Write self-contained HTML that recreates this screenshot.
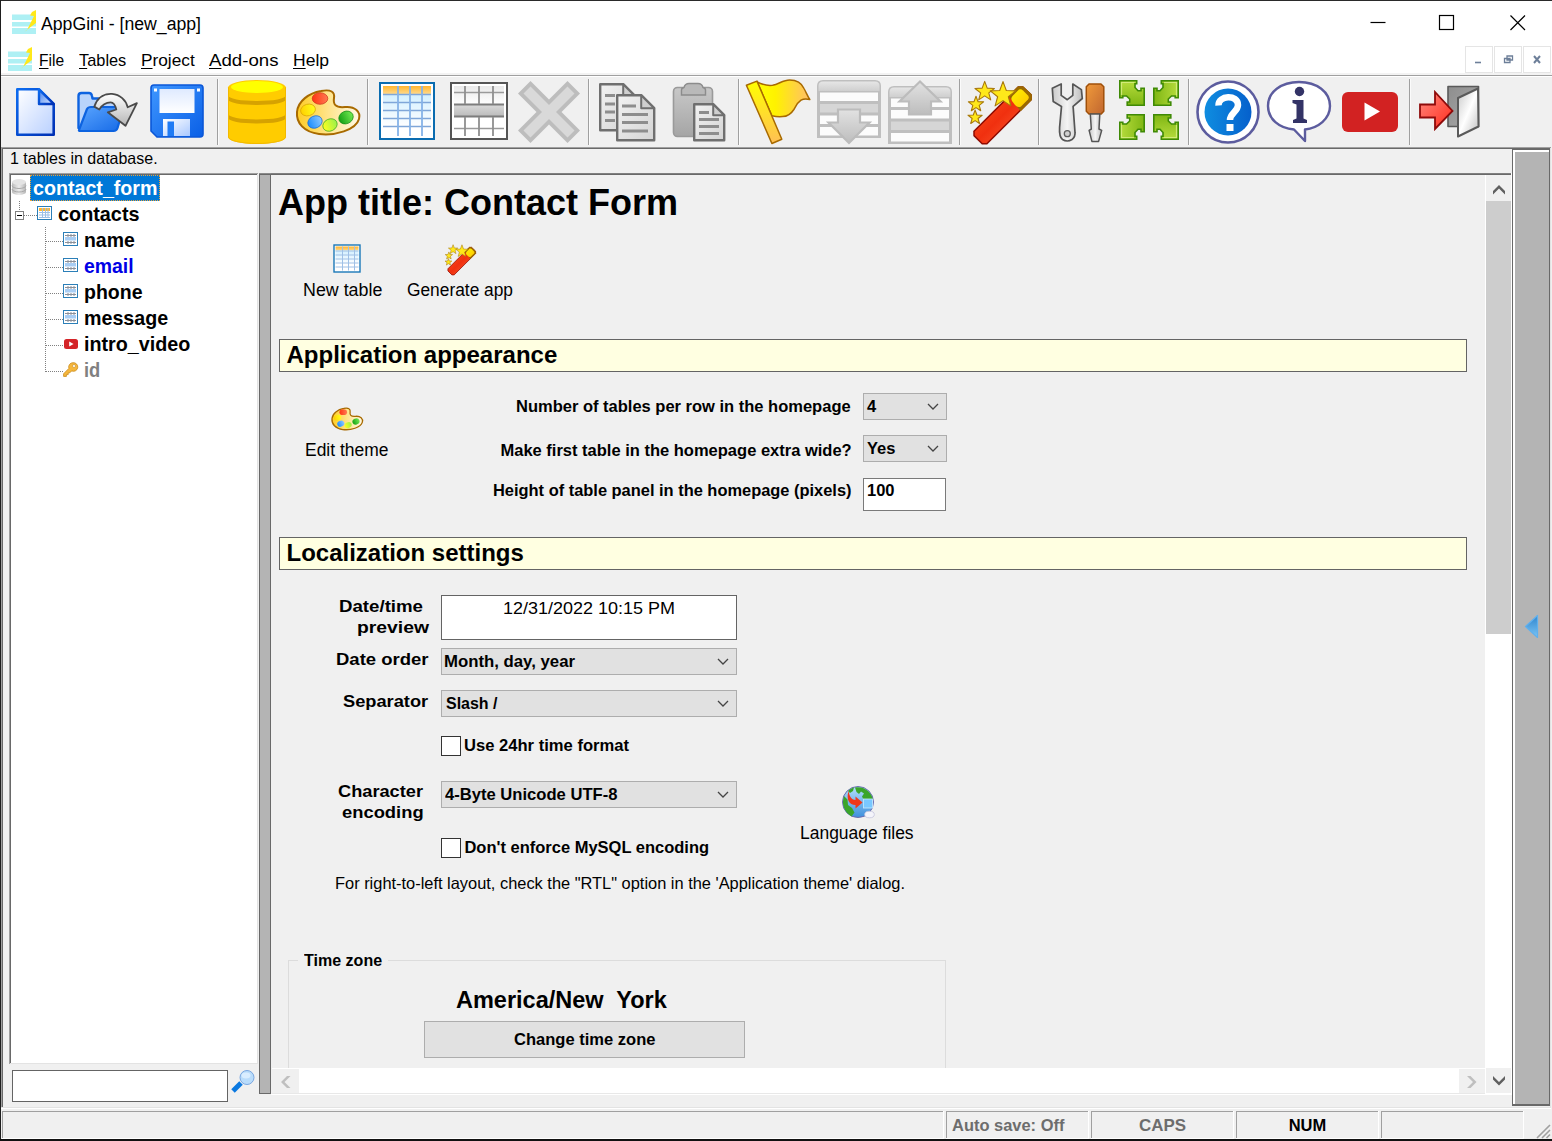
<!DOCTYPE html>
<html lang="en"><head><meta charset="utf-8"><title>AppGini - [new_app]</title>
<style>
html,body{margin:0;padding:0}
body{width:1552px;height:1141px;position:relative;overflow:hidden;background:#f0f0f0;font-family:"Liberation Sans",sans-serif}
body div,body svg,body span.t{position:absolute}
span.t{white-space:nowrap;transform-origin:0 50%;display:block}
svg{overflow:visible}
u{text-decoration:underline;text-decoration-thickness:1px;text-underline-offset:2px;text-decoration-skip-ink:none}
</style></head><body>
<div style="left:0px;top:0px;width:1552px;height:75px;background:#fff;"></div>
<svg style="left:12px;top:10px" width="24" height="24" viewBox="0 0 24 24"><rect x="0" y="4.5" width="24" height="5.5" fill="#aef0f4"/><rect x="0" y="12" width="24" height="4.5" fill="#aef0f4"/><rect x="0" y="18" width="24" height="6" fill="#aef0f4"/><path d="M24 0 L20 2 L18 5.5 L22 6 L15 20 L12 22 L24 13 Z" fill="#ffe81a"/></svg>
<span class="t" style="left:41.00px;top:15px;font-size:18px;line-height:18px;color:#000;transform:scaleX(0.9810);">AppGini - [new_app]</span>
<svg style="left:1360px;top:10px" width="180" height="30" viewBox="0 0 180 30"><path d="M10.5 12.5H25.5" stroke="#000" stroke-width="1.2" fill="none"/><rect x="79.5" y="5.5" width="14" height="14" fill="none" stroke="#000" stroke-width="1.2"/><path d="M150.5 5.5L165 20M165 5.5L150.5 20" stroke="#000" stroke-width="1.2" fill="none"/></svg>
<svg style="left:8px;top:47px" width="24" height="24" viewBox="0 0 24 24"><rect x="0" y="4.5" width="24" height="5.5" fill="#aef0f4"/><rect x="0" y="12" width="24" height="4.5" fill="#aef0f4"/><rect x="0" y="18" width="24" height="6" fill="#aef0f4"/><path d="M24 0 L20 2 L18 5.5 L22 6 L15 20 L12 22 L24 13 Z" fill="#ffe81a"/></svg>
<span class="t" style="left:39.3px;top:52px;font-size:17px;line-height:17px;transform:scaleX(0.9163)"><u>F</u>ile</span>
<span class="t" style="left:79px;top:52px;font-size:17px;line-height:17px;transform:scaleX(0.9625)"><u>T</u>ables</span>
<span class="t" style="left:141px;top:52px;font-size:17px;line-height:17px;transform:scaleX(1.0149)"><u>P</u>roject</span>
<span class="t" style="left:209px;top:52px;font-size:17px;line-height:17px;transform:scaleX(1.0976)"><u>A</u>dd-ons</span>
<span class="t" style="left:293px;top:52px;font-size:17px;line-height:17px;transform:scaleX(1.0296)"><u>H</u>elp</span>
<div style="left:1465px;top:46px;width:28px;height:27px;background:#fff;border:1px solid #e5e5e5;box-sizing:border-box"></div>
<div style="left:1494px;top:46px;width:28px;height:27px;background:#fff;border:1px solid #e5e5e5;box-sizing:border-box"></div>
<div style="left:1523px;top:46px;width:28px;height:27px;background:#fff;border:1px solid #e5e5e5;box-sizing:border-box"></div>
<svg style="left:1465px;top:46px" width="86" height="27" viewBox="0 0 86 27"><path d="M10 16.5H16" stroke="#6d7f99" stroke-width="1.6"/><path d="M42 10H47.500V14H42ZM39.500 12.500H45V16.500H39.500Z" fill="#fff" stroke="#6d7f99" stroke-width="1.300"/><path d="M69 10L75 17M75 10L69 17" stroke="#6d7f99" stroke-width="2"/></svg>
<div style="left:0px;top:0px;width:1552px;height:1px;background:#2a2a2a;"></div>
<div style="left:0px;top:0px;width:1px;height:1141px;background:#1e1e1e;"></div>
<div style="left:0px;top:1139px;width:1552px;height:2px;background:#111;"></div>
<div style="left:1px;top:73px;width:1552px;height:2px;background:#f3f3f3;"></div>
<div style="left:1px;top:75px;width:1551px;height:1px;background:#a0a0a0;"></div>
<div style="left:1px;top:76px;width:1551px;height:1px;background:#fff;"></div>
<div style="left:1px;top:147px;width:1550px;height:1px;background:#a0a0a0;"></div>
<div style="left:2px;top:148px;width:1548px;height:1px;background:#696969;"></div>
<div style="left:1px;top:147px;width:1px;height:961px;background:#a0a0a0;"></div>
<div style="left:2px;top:148px;width:1px;height:959px;background:#696969;"></div>
<div style="left:1550px;top:148px;width:1px;height:960px;background:#e3e3e3;"></div>
<div style="left:1px;top:1108px;width:1550px;height:1px;background:#fff;"></div>
<div style="left:1px;top:1107px;width:1550px;height:1px;background:#e3e3e3;"></div>
<div style="left:1512px;top:149px;width:38px;height:957px;background:#b4b4b4;border:1px solid #696969;box-sizing:border-box"></div>
<div style="left:1513px;top:150px;width:1px;height:955px;background:#fff;"></div>
<div style="left:1514px;top:150px;width:1px;height:955px;background:#fff;"></div>
<div style="left:1513px;top:150px;width:36px;height:1px;background:#fff;"></div>
<div style="left:1513px;top:151px;width:36px;height:1px;background:#fff;"></div>
<div style="left:1512px;top:149px;width:38px;height:1px;background:#696969;"></div>
<div style="left:1512px;top:1104px;width:38px;height:1px;background:#696969;"></div>
<svg style="left:1524px;top:614px" width="16" height="26" viewBox="0 0 16 26"><defs><linearGradient id="tri" x1="0" y1="0" x2="0" y2="1"><stop offset="0" stop-color="#2f86cf"/><stop offset="1" stop-color="#7cc4f3"/></linearGradient></defs><path d="M13.5 1.5V23.5L1.5 12.5Z" fill="url(#tri)" stroke="#5fb0ee" stroke-width="1.2" stroke-linejoin="round"/></svg>
<div style="left:2px;top:1111px;width:941px;height:1px;background:#a0a0a0;"></div>
<div style="left:2px;top:1111px;width:1px;height:27px;background:#a0a0a0;"></div>
<div style="left:943px;top:1111px;width:1px;height:28px;background:#fff;"></div>
<div style="left:2px;top:1138px;width:942px;height:1px;background:#fff;"></div>
<div style="left:946px;top:1111px;width:142px;height:1px;background:#a0a0a0;"></div>
<div style="left:946px;top:1111px;width:1px;height:27px;background:#a0a0a0;"></div>
<div style="left:1088px;top:1111px;width:1px;height:28px;background:#fff;"></div>
<div style="left:946px;top:1138px;width:143px;height:1px;background:#fff;"></div>
<div style="left:1091px;top:1111px;width:142px;height:1px;background:#a0a0a0;"></div>
<div style="left:1091px;top:1111px;width:1px;height:27px;background:#a0a0a0;"></div>
<div style="left:1233px;top:1111px;width:1px;height:28px;background:#fff;"></div>
<div style="left:1091px;top:1138px;width:143px;height:1px;background:#fff;"></div>
<div style="left:1236px;top:1111px;width:142px;height:1px;background:#a0a0a0;"></div>
<div style="left:1236px;top:1111px;width:1px;height:27px;background:#a0a0a0;"></div>
<div style="left:1378px;top:1111px;width:1px;height:28px;background:#fff;"></div>
<div style="left:1236px;top:1138px;width:143px;height:1px;background:#fff;"></div>
<div style="left:1381px;top:1111px;width:142px;height:1px;background:#a0a0a0;"></div>
<div style="left:1381px;top:1111px;width:1px;height:27px;background:#a0a0a0;"></div>
<div style="left:1523px;top:1111px;width:1px;height:28px;background:#fff;"></div>
<div style="left:1381px;top:1138px;width:143px;height:1px;background:#fff;"></div>
<span class="t" style="left:952.00px;top:1117px;font-size:16.5px;line-height:16.5px;color:#6d6d6d;font-weight:bold;transform:scaleX(0.9968);">Auto save: Off</span>
<span class="t" style="left:1138.80px;top:1117px;font-size:16.5px;line-height:16.5px;color:#6d6d6d;font-weight:bold;transform:scaleX(1.0252);">CAPS</span>
<span class="t" style="left:1288.71px;top:1117px;font-size:16.5px;line-height:16.5px;color:#000;font-weight:bold;">NUM</span>
<svg style="left:1536px;top:1124px" width="14" height="14" viewBox="0 0 14 14"><path d="M1 14L14 1M6 14L14 6M10.5 14L14 10.5" stroke="#a0a0a0" stroke-width="1.6"/></svg>
<div style="left:217px;top:79px;width:1px;height:66px;background:#a0a0a0;"></div>
<div style="left:218px;top:79px;width:1px;height:66px;background:#fbfbfb;"></div>
<div style="left:367px;top:79px;width:1px;height:66px;background:#a0a0a0;"></div>
<div style="left:368px;top:79px;width:1px;height:66px;background:#fbfbfb;"></div>
<div style="left:588px;top:79px;width:1px;height:66px;background:#a0a0a0;"></div>
<div style="left:589px;top:79px;width:1px;height:66px;background:#fbfbfb;"></div>
<div style="left:738px;top:79px;width:1px;height:66px;background:#a0a0a0;"></div>
<div style="left:739px;top:79px;width:1px;height:66px;background:#fbfbfb;"></div>
<div style="left:959px;top:79px;width:1px;height:66px;background:#a0a0a0;"></div>
<div style="left:960px;top:79px;width:1px;height:66px;background:#fbfbfb;"></div>
<div style="left:1038px;top:79px;width:1px;height:66px;background:#a0a0a0;"></div>
<div style="left:1039px;top:79px;width:1px;height:66px;background:#fbfbfb;"></div>
<div style="left:1188px;top:79px;width:1px;height:66px;background:#a0a0a0;"></div>
<div style="left:1189px;top:79px;width:1px;height:66px;background:#fbfbfb;"></div>
<div style="left:1409px;top:79px;width:1px;height:66px;background:#a0a0a0;"></div>
<div style="left:1410px;top:79px;width:1px;height:66px;background:#fbfbfb;"></div>
<svg style="left:0;top:0" width="0" height="0"><defs>
<linearGradient id="gDoc" x1="0" y1="0" x2="1" y2="1"><stop offset="0" stop-color="#ffffff"/><stop offset="1" stop-color="#b9d0ff"/></linearGradient>
<linearGradient id="gDocS" x1="0" y1="0" x2="1" y2="1"><stop offset="0" stop-color="#0d6cf0"/><stop offset="1" stop-color="#0030b4"/></linearGradient>
<linearGradient id="gFold" x1="0" y1="0" x2="1" y2="1"><stop offset="0" stop-color="#3b7df0"/><stop offset="1" stop-color="#dfe9ff"/></linearGradient>
<linearGradient id="gBlue" x1="0" y1="0" x2="1" y2="1"><stop offset="0" stop-color="#3f97ff"/><stop offset="1" stop-color="#0a5fe6"/></linearGradient>
<linearGradient id="gFolder" x1="0" y1="0" x2="1" y2="1"><stop offset="0" stop-color="#5aa5ff"/><stop offset="1" stop-color="#1569e6"/></linearGradient>
<linearGradient id="gArrow" x1="0" y1="0" x2="0" y2="1"><stop offset="0" stop-color="#ffffff"/><stop offset="1" stop-color="#b5b5b5"/></linearGradient>
<linearGradient id="gLabel" x1="0" y1="0" x2="0" y2="1"><stop offset="0" stop-color="#dfeaff"/><stop offset="1" stop-color="#ffffff"/></linearGradient>
<linearGradient id="gShut" x1="0" y1="0" x2="1" y2="1"><stop offset="0" stop-color="#ffffff"/><stop offset="1" stop-color="#a9c8ff"/></linearGradient>
<linearGradient id="gPal" x1="0" y1="0" x2="1" y2="0"><stop offset="0" stop-color="#ffcc24"/><stop offset=".5" stop-color="#ffe48a"/><stop offset="1" stop-color="#fffae6"/></linearGradient>
<linearGradient id="gHdr" x1="0" y1="0" x2="0" y2="1"><stop offset="0" stop-color="#ffb52e"/><stop offset="1" stop-color="#ffd98c"/></linearGradient>
<linearGradient id="gRows" x1="0" y1="0" x2="0" y2="1"><stop offset="0" stop-color="#d2efff"/><stop offset="1" stop-color="#ffffff"/></linearGradient>
<linearGradient id="gGray" x1="0" y1="0" x2="0" y2="1"><stop offset="0" stop-color="#e9e9e9"/><stop offset="1" stop-color="#ffffff"/></linearGradient>
<linearGradient id="gBand" x1="0" y1="0" x2="0" y2="1"><stop offset="0" stop-color="#d9d9d9"/><stop offset="1" stop-color="#bcbcbc"/></linearGradient>
<linearGradient id="gPaper" x1="0" y1="0" x2="1" y2="1"><stop offset="0" stop-color="#f2f2f2"/><stop offset="1" stop-color="#d4d4d4"/></linearGradient>
<linearGradient id="gClip" x1="0" y1="0" x2="0" y2="1"><stop offset="0" stop-color="#c8c8c8"/><stop offset="1" stop-color="#a5a5a5"/></linearGradient>
<linearGradient id="gFlag" x1="0" y1="0" x2="1" y2="0"><stop offset="0" stop-color="#ffff00"/><stop offset=".35" stop-color="#fff200"/><stop offset="1" stop-color="#ffbe6a"/></linearGradient>
<linearGradient id="gPole" x1="0" y1="0" x2="0" y2="1"><stop offset="0" stop-color="#ffff00"/><stop offset="1" stop-color="#ffbf55"/></linearGradient>
<linearGradient id="gWand" x1="0" y1="0" x2="1" y2="1"><stop offset="0" stop-color="#ff5a1f"/><stop offset=".5" stop-color="#f0300f"/><stop offset="1" stop-color="#ff6a3a"/></linearGradient>
<linearGradient id="gTip" x1="0" y1="0" x2="1" y2="1"><stop offset="0" stop-color="#fff200"/><stop offset="1" stop-color="#ffc400"/></linearGradient>
<linearGradient id="gMetal" x1="0" y1="0" x2="1" y2="0"><stop offset="0" stop-color="#c9c9c9"/><stop offset=".5" stop-color="#f4f4f4"/><stop offset="1" stop-color="#bdbdbd"/></linearGradient>
<linearGradient id="gHandle" x1="0" y1="0" x2="1" y2="1"><stop offset="0" stop-color="#f09a3a"/><stop offset="1" stop-color="#c06630"/></linearGradient>
<linearGradient id="gGreen" x1="0" y1="0" x2="0" y2="1"><stop offset="0" stop-color="#b6dc3c"/><stop offset="1" stop-color="#7fb614"/></linearGradient>
<linearGradient id="gHelp" x1="0" y1="0" x2="1" y2="0"><stop offset="0" stop-color="#0f8de0"/><stop offset="1" stop-color="#0560cc"/></linearGradient>
<linearGradient id="gRedArrow" x1="0" y1="0" x2="1" y2="1"><stop offset="0" stop-color="#ff8a80"/><stop offset="1" stop-color="#ff2a1a"/></linearGradient>
<linearGradient id="gDoorB" x1="0" y1="0" x2="1" y2="1"><stop offset="0" stop-color="#8e8e8e"/><stop offset="1" stop-color="#a9a9a9"/></linearGradient>
<linearGradient id="gDoorF" x1="0" y1="0" x2="1" y2="1"><stop offset="0" stop-color="#c8c8c8"/><stop offset=".5" stop-color="#ffffff"/><stop offset="1" stop-color="#bdbdbd"/></linearGradient>
<linearGradient id="gDisabled" x1="0" y1="0" x2="0" y2="1"><stop offset="0" stop-color="#e2e2e2"/><stop offset="1" stop-color="#bdbdbd"/></linearGradient>
<linearGradient id="gDisHead" x1="0" y1="0" x2="0" y2="1"><stop offset="0" stop-color="#e6e6e6"/><stop offset="1" stop-color="#cfcfcf"/></linearGradient>
<linearGradient id="bR" x1="0" x2="1"><stop offset="0" stop-color="#ff3512"/><stop offset="1" stop-color="#ff7a52"/></linearGradient>
<linearGradient id="bY" x1="0" x2="1"><stop offset="0" stop-color="#ffd000"/><stop offset="1" stop-color="#ffff1e"/></linearGradient>
<linearGradient id="bB" x1="0" x2="1"><stop offset="0" stop-color="#1a8cff"/><stop offset="1" stop-color="#8ec9ff"/></linearGradient>
<linearGradient id="bL" x1="0" x2="1"><stop offset="0" stop-color="#ffff1e"/><stop offset="1" stop-color="#9af04a"/></linearGradient>
<linearGradient id="bG" x1="0" x2="1"><stop offset="0" stop-color="#14a014"/><stop offset="1" stop-color="#72ea52"/></linearGradient>
</defs></svg>
<svg style="left:15px;top:87px" width="42" height="50" viewBox="0 0 42 50"><path d="M2.300 2.300H24L38.700 17V47.700H2.300Z" fill="url(#gDoc)" stroke="url(#gDocS)" stroke-width="2.600" stroke-linejoin="round"/><path d="M24 2.300V17H38.700Z" fill="url(#gFold)" stroke="url(#gDocS)" stroke-width="2.400" stroke-linejoin="round"/></svg>
<svg style="left:76px;top:90px" width="64" height="44" viewBox="0 0 64 44"><path d="M2.5 6Q2.5 3 5.5 3H13Q15.5 3 16 6L16.5 8.5H38Q41 8.5 41 11.5V38H2.5Z" fill="#b9d4fb" stroke="#0d63e0" stroke-width="2.4" stroke-linejoin="round"/><path d="M3 40L11 19Q12 17 15 17H45Q48 17 47 20L41.5 38Q40.5 41 37.5 41H4.5Q2.5 41 3 40Z" fill="url(#gFolder)" stroke="#0d63e0" stroke-width="2.2" stroke-linejoin="round"/><path d="M18.300 16.600C22 6 30 3.500 36 3.900C44 4.500 50 10 51.700 17.300L60.900 13.100L49.500 35.800L31.800 22.300L40.300 19.500C39 14 37 12.400 34.600 12.400C30 12.400 26 15 23.300 19.500Z" fill="url(#gArrow)" stroke="#4a4a4a" stroke-width="1.8" stroke-linejoin="round"/></svg>
<svg style="left:150px;top:84px" width="54" height="54" viewBox="0 0 54 54"><path d="M4 1H50Q53 1 53 4V50Q53 53 50 53H7L1 47V4Q1 1 4 1Z" fill="url(#gBlue)" stroke="#0b57d8" stroke-width="1.6"/><rect x="9.500" y="5" width="35" height="24" fill="url(#gLabel)"/><rect x="4" y="4.500" width="3" height="3" fill="#fff"/><rect x="47" y="4.500" width="3" height="3" fill="#fff"/><rect x="13" y="35" width="27" height="17" fill="url(#gShut)"/><rect x="17.500" y="37.500" width="6.500" height="14.500" fill="#1f7bf5"/></svg>
<svg style="left:228px;top:80px" width="58" height="64" viewBox="0 0 58 64"><path d="M0 7V57A29 7 0 0 0 58 57V7Z" fill="#ffcc00"/><path d="M0 15.500A29 5.500 0 0 0 58 15.500V19.500A29 5.500 0 0 1 0 19.500Z" fill="#d6a200"/><path d="M0 34A29 5.500 0 0 0 58 34V38A29 5.500 0 0 1 0 38Z" fill="#d6a200"/><ellipse cx="29" cy="7.500" rx="29" ry="7.500" fill="#ffcc00"/><ellipse cx="29" cy="7" rx="26" ry="6" fill="#ffff00"/><path d="M.5 7.500V57A28.500 6.500 0 0 0 57.500 57V7.500" fill="none" stroke="#f2b800" stroke-width="1"/></svg>
<svg style="left:295px;top:88px" width="67" height="49" viewBox="0 0 67 49"><path d="M26 3C36 1 40 4 39 10C38 16 40 20 50 19C60 18 66 24 64 31C61 42 40 48 24 46C9 44 1 35 2 24C3 13 14 5 26 3Z" fill="url(#gPal)" stroke="#a86a00" stroke-width="2"/><ellipse cx="25" cy="10.500" rx="7.800" ry="5.800" fill="url(#bR)" stroke="#c8301a" stroke-width=".7"/><ellipse cx="13" cy="22" rx="7.500" ry="5.800" fill="url(#bY)" stroke="#d9a400" stroke-width=".7" transform="rotate(-15 13 22)"/><ellipse cx="20" cy="34" rx="7.400" ry="6" fill="url(#bB)" stroke="#1a6ad0" stroke-width=".7" transform="rotate(-25 20 34)"/><ellipse cx="35" cy="37" rx="7.400" ry="6" fill="url(#bL)" stroke="#3fa820" stroke-width=".7" transform="rotate(-25 35 37)"/><ellipse cx="51" cy="29.500" rx="7.400" ry="6.200" fill="url(#bG)" stroke="#128a12" stroke-width=".7" transform="rotate(-25 51 29.5)"/></svg>
<svg style="left:379px;top:82px" width="56" height="58" viewBox="0 0 56 58"><rect x="1" y="1" width="54" height="56" fill="#fff" stroke="#0a6cb0" stroke-width="2"/><rect x="4" y="4" width="48" height="8" fill="url(#gHdr)"/><rect x="4" y="12" width="48" height="33" fill="url(#gRows)"/><path d="M4 12.500H52M4 20.500H52M4 28.500H52M4 36.500H52M4 44.500H52" stroke="#7fa6d8" stroke-width="1.600" fill="none"/><path d="M19 4V54M31 4V54M43 4V54" stroke="#86b3e8" stroke-width="1.800" fill="none"/></svg>
<svg style="left:450px;top:82px" width="58" height="58" viewBox="0 0 58 58"><rect x="1" y="1" width="56" height="56" fill="#fff" stroke="#555" stroke-width="2"/><rect x="4" y="4" width="50" height="19" fill="url(#gGray)"/><rect x="4" y="23" width="50" height="11" fill="url(#gBand)"/><path d="M4 10.500H54M4 46.500H54" stroke="#9a9a9a" stroke-width="1.600"/><path d="M4 22.500H54M4 34.500H54" stroke="#7d7d7d" stroke-width="1.800"/><path d="M15 4V22M29 4V22M43 4V22M15 35V54M29 35V54M43 35V54" stroke="#8f8f8f" stroke-width="1.800"/></svg>
<svg style="left:517px;top:80px" width="64" height="64" viewBox="0 0 64 64"><path d="M13.500 1L32 19.500L50.500 1L63 13.500L44.500 32L63 50.500L50.500 63L32 44.500L13.500 63L1 50.500L19.500 32L1 13.500Z" fill="#bdbdbd"/><path d="M13.500 6.500L32 25L50.500 6.500L57.500 13.500L39 32L57.500 50.500L50.500 57.500L32 39L13.500 57.500L6.500 50.500L25 32L6.500 13.500Z" fill="#d9d9d9"/></svg>
<svg style="left:598px;top:82px" width="58" height="60" viewBox="0 0 58 60"><path d="M2.2 2.2H25.200000000000003L36.2 13.2V48.2H2.2Z" fill="url(#gPaper)" stroke="#6f6f6f" stroke-width="2.400" stroke-linejoin="round"/><path d="M25.200000000000003 2.2V13.2H36.2Z" fill="#cfcfcf" stroke="#6f6f6f" stroke-width="2" stroke-linejoin="round"/><path d="M7 13.5H17" stroke="#8d8d8d" stroke-width="3"/><path d="M7 22H17" stroke="#8d8d8d" stroke-width="3"/><path d="M7 30H17" stroke="#8d8d8d" stroke-width="3"/><path d="M7 38.5H17" stroke="#8d8d8d" stroke-width="3"/><path d="M19.2 13.2H43.2L56.2 26.2V58.2H19.2Z" fill="url(#gPaper)" stroke="#6f6f6f" stroke-width="2.400" stroke-linejoin="round"/><path d="M43.2 13.2V26.2H56.2Z" fill="#cfcfcf" stroke="#6f6f6f" stroke-width="2" stroke-linejoin="round"/><path d="M24 24H38" stroke="#8d8d8d" stroke-width="3"/><path d="M24 32.5H50" stroke="#8d8d8d" stroke-width="3"/><path d="M24 40.5H50" stroke="#8d8d8d" stroke-width="3"/><path d="M24 49H50" stroke="#8d8d8d" stroke-width="3"/></svg>
<svg style="left:672px;top:82px" width="54" height="60" viewBox="0 0 54 60"><rect x="1.500" y="5.500" width="39" height="49" rx="4" fill="url(#gClip)" stroke="#9a9a9a" stroke-width="1.600"/><path d="M9.500 13V8Q9.500 6 12 5.500Q13 1.500 17 1.500H26Q30 1.500 31 5.500Q33.500 6 33.500 8V13Z" fill="#b9b9b9" stroke="#8c8c8c" stroke-width="1.400"/><path d="M22.2 22.2H41.2L52.2 33.2V58.2H22.2Z" fill="url(#gPaper)" stroke="#6f6f6f" stroke-width="2.400" stroke-linejoin="round"/><path d="M41.2 22.2V33.2H52.2Z" fill="#cfcfcf" stroke="#6f6f6f" stroke-width="2" stroke-linejoin="round"/><path d="M27 30.5H37" stroke="#8d8d8d" stroke-width="3"/><path d="M27 37.5H47" stroke="#8d8d8d" stroke-width="3"/><path d="M27 44.5H47" stroke="#8d8d8d" stroke-width="3"/><path d="M27 51.5H47" stroke="#8d8d8d" stroke-width="3"/></svg>
<svg style="left:745px;top:79px" width="67" height="66" viewBox="0 0 67 66"><path d="M12 2.800C18 6 22 7 27.600 6.300C34 5 38 1 44.600 1C52 1 57 5 59 9.500C61 13 62.500 17 64.800 20.500C61 19.500 58 20 56 21.200C52 24 51 27 48.900 30.500C46 35 42 37.500 37.600 37.600C33 38 30 37.500 26.900 36.800Z" fill="url(#gFlag)" stroke="#a86a00" stroke-width="1.500" stroke-linejoin="round"/><path d="M1.400 6.300L12 2.100L36.800 60.200L26.900 64.500Z" fill="url(#gPole)" stroke="#a86a00" stroke-width="1.500" stroke-linejoin="round"/></svg>
<svg style="left:817px;top:80px" width="64" height="64" viewBox="0 0 64 64"><path d="M0 6Q0 0 6 0H58Q64 0 64 6V58H0Z" fill="#bfbfbf"/><path d="M1.500 6Q1.500 1.500 6 1.500H58Q62.500 1.500 62.500 6V11H1.500Z" fill="url(#gDisHead)"/><rect x="3" y="12.500" width="58" height="8.500" fill="#fcfcfc"/><rect x="3" y="24" width="58" height="8.500" fill="#d6d6d6"/><rect x="3" y="35.500" width="58" height="8.500" fill="#fcfcfc"/><rect x="3" y="47" width="58" height="8.500" fill="#fcfcfc"/><path d="M21 29.500H43V42.500H52.500L32 63L11.500 42.500H21Z" fill="url(#gDisabled)" stroke="#bcbcbc" stroke-width="2.200"/></svg>
<svg style="left:888px;top:80px" width="64" height="64" viewBox="0 0 64 64"><path d="M0 12Q0 6 6 6H58Q64 6 64 12V64H0Z" fill="#bfbfbf"/><path d="M1.500 12Q1.500 7.500 6 7.500H58Q62.500 7.500 62.500 12V17H1.500Z" fill="url(#gDisHead)"/><rect x="3" y="18.500" width="58" height="8.500" fill="#fcfcfc"/><rect x="3" y="30" width="58" height="8.500" fill="#fcfcfc"/><rect x="3" y="41.500" width="58" height="8.500" fill="#d6d6d6"/><rect x="3" y="53" width="58" height="8.500" fill="#fcfcfc"/><path d="M32 1.500L52.500 21.500H43V34.500H21V21.500H11.500Z" fill="url(#gDisabled)" stroke="#bcbcbc" stroke-width="2.200"/></svg>
<svg style="left:968px;top:80px" width="64" height="64" viewBox="0 0 64 64"><g transform="scale(1.0000)"><path d="M6 51.200L50.200 7H54.900L63.100 14.900V19.700L18.900 63.800H14.200L6 55.600Z" fill="url(#gWand)" stroke="#8e0a00" stroke-width="1.500" stroke-linejoin="round"/><path d="M41.300 15.900L50.200 7H54.900L63.100 14.900V19.700L52.700 30.100Z" fill="#9a6a00" stroke="#9a6a00" stroke-width="1.500" stroke-linejoin="round"/><path d="M44.500 16L51 9.500Q53 8.500 55 10.500L60 15.500Q61.500 17.500 60 19.500L53 26.500Q50 28 47 25L44 21Q42.500 18.500 44.500 16Z" fill="url(#gTip)"/><path d="M16.70 1.40L19.22 8.13L26.40 8.45L20.77 12.92L22.70 19.85L16.70 15.88L10.70 19.85L12.63 12.92L7.00 8.45L14.18 8.13Z" fill="#ffe81a" stroke="#a8780a" stroke-width="1.100" stroke-linejoin="round"/><path d="M35.00 1.60L38.31 10.45L47.74 10.86L40.35 16.74L42.88 25.84L35.00 20.63L27.12 25.84L29.65 16.74L22.26 10.86L31.69 10.45Z" fill="#ffe81a" stroke="#a8780a" stroke-width="1.100" stroke-linejoin="round"/><path d="M8.00 16.30L9.97 21.58L15.61 21.83L11.20 25.34L12.70 30.77L8.00 27.66L3.30 30.77L4.80 25.34L0.39 21.83L6.03 21.58Z" fill="#ffe81a" stroke="#a8780a" stroke-width="1.100" stroke-linejoin="round"/><path d="M7.10 30.10L8.93 34.99L14.14 35.21L10.06 38.46L11.45 43.49L7.10 40.61L2.75 43.49L4.14 38.46L0.06 35.21L5.27 34.99Z" fill="#ffe81a" stroke="#a8780a" stroke-width="1.100" stroke-linejoin="round"/></g></svg>
<svg style="left:1051px;top:83px" width="56" height="60" viewBox="0 0 56 60"><path d="M1.300 5.300L10.200 1V12.400L16.300 16.700L21.800 12.400V1L30.400 6.600L31.300 15.500L22.100 23.400L24 49.200Q24.500 54 21 56.500Q16.300 59.500 11.500 56.500Q8 54 8.600 44.300L10.500 23.400L2.200 18.500Z" fill="url(#gMetal)" stroke="#555" stroke-width="1.700" stroke-linejoin="round"/><circle cx="16.300" cy="50.700" r="3" fill="#d0d0d0" stroke="#5e5e5e" stroke-width="1.300"/><path d="M38 1H50L52.800 3.800V28.300L50 31.100H38L35.300 28.300V3.800Z" fill="url(#gHandle)" stroke="#a0500a" stroke-width="1.500" stroke-linejoin="round"/><path d="M39.300 31.100H48.800L48 46L50.700 47.400L47.600 58.400H40.900L38.100 47.400L40.300 46Z" fill="url(#gMetal)" stroke="#555" stroke-width="1.500" stroke-linejoin="round"/></svg>
<svg style="left:1119px;top:80px" width="60" height="60" viewBox="0 0 60 60"><g transform="translate(0 0) rotate(0 13 13)"><path d="M.8 .8H17.700V3.800H16V7.500L19 10.700H22V8.200H25.200V25.200H8.200V22H10.700V19L7.500 16H3.800V17.700H.8Z" fill="url(#gGreen)" stroke="#3f8a06" stroke-width="1.600" stroke-linejoin="miter"/><path d="M2.500 15V2.500H15.500" fill="none" stroke="#d9f08a" stroke-width="1.200" opacity=".8"/></g><g transform="translate(34 0) rotate(90 13 13)"><path d="M.8 .8H17.700V3.800H16V7.500L19 10.700H22V8.200H25.200V25.200H8.200V22H10.700V19L7.500 16H3.800V17.700H.8Z" fill="url(#gGreen)" stroke="#3f8a06" stroke-width="1.600" stroke-linejoin="miter"/><path d="M2.500 15V2.500H15.500" fill="none" stroke="#d9f08a" stroke-width="1.200" opacity=".8"/></g><g transform="translate(34 34) rotate(180 13 13)"><path d="M.8 .8H17.700V3.800H16V7.500L19 10.700H22V8.200H25.200V25.200H8.200V22H10.700V19L7.500 16H3.800V17.700H.8Z" fill="url(#gGreen)" stroke="#3f8a06" stroke-width="1.600" stroke-linejoin="miter"/><path d="M2.500 15V2.500H15.500" fill="none" stroke="#d9f08a" stroke-width="1.200" opacity=".8"/></g><g transform="translate(0 34) rotate(270 13 13)"><path d="M.8 .8H17.700V3.800H16V7.500L19 10.700H22V8.200H25.200V25.200H8.200V22H10.700V19L7.500 16H3.800V17.700H.8Z" fill="url(#gGreen)" stroke="#3f8a06" stroke-width="1.600" stroke-linejoin="miter"/><path d="M2.500 15V2.500H15.500" fill="none" stroke="#d9f08a" stroke-width="1.200" opacity=".8"/></g></svg>
<svg style="left:1196px;top:80px" width="64" height="64" viewBox="0 0 64 64"><circle cx="32" cy="32" r="30.500" fill="#fff" stroke="#5c5c9e" stroke-width="2.600"/><circle cx="32" cy="32" r="23.500" fill="url(#gHelp)"/><path d="M22.500 25.500C22 15 42 14 42 25C42 31.500 34 33 34 40" fill="none" stroke="#fff" stroke-width="6.500"/><rect x="30.500" y="44" width="7" height="7" fill="#fff"/></svg>
<svg style="left:1266px;top:80px" width="66" height="63" viewBox="0 0 66 63"><path d="M33 2C51 2 64 12 64 26C64 39 52 48 39 49.500V61L28 49.500C13 48 2 39 2 26C2 12 15 2 33 2Z" fill="#fff" stroke="#5c5c9e" stroke-width="2.400" stroke-linejoin="round"/><circle cx="33.500" cy="11.500" r="4.700" fill="#333366"/><path d="M26.500 20H37.500V38.500L41 40V43H27V40L30.500 38.500V24.500L26.500 23Z" fill="#333366"/></svg>
<svg style="left:1342px;top:92px" width="56" height="40" viewBox="0 0 56 40"><rect width="56" height="40" rx="6" fill="#d22222"/><path d="M22.500 10.500L38 19.500L22.500 28.500Z" fill="#fff"/></svg>
<svg style="left:1418px;top:85px" width="62" height="53" viewBox="0 0 62 53"><path d="M30 1.500H60.500V41.500H30Z" fill="url(#gDoorB)" stroke="#5a5a5a" stroke-width="1.600" stroke-linejoin="round"/><path d="M40 13L60 3.500L60.500 41.500L40 51.500Z" fill="url(#gDoorF)" stroke="#5a5a5a" stroke-width="2" stroke-linejoin="round"/><path d="M2 19.500H17V7L34.500 26L17 44V32.500H2Z" fill="url(#gRedArrow)" stroke="#8e0a0a" stroke-width="1.800" stroke-linejoin="miter"/></svg>
<span class="t" style="left:10.00px;top:150px;font-size:16.5px;line-height:16.5px;color:#000;transform:scaleX(0.9693);">1 tables in database.</span>
<div style="left:9px;top:173px;width:249px;height:891px;background:#fff;"></div>
<div style="left:9px;top:173px;width:249px;height:1px;background:#a0a0a0;"></div>
<div style="left:10px;top:174px;width:247px;height:1px;background:#696969;"></div>
<div style="left:9px;top:173px;width:1px;height:891px;background:#a0a0a0;"></div>
<div style="left:10px;top:174px;width:1px;height:889px;background:#696969;"></div>
<div style="left:257px;top:174px;width:1px;height:890px;background:#e3e3e3;"></div>
<div style="left:10px;top:1063px;width:248px;height:1px;background:#e3e3e3;"></div>
<div style="left:30px;top:175px;width:130px;height:26px;background:#0078d7;box-sizing:border-box;border:1px dotted #e8a33d"></div>
<span class="t" style="left:33.00px;top:177px;font-size:21px;line-height:21px;color:#fff;font-weight:bold;transform:scaleX(0.9359);">contact_form</span>
<svg style="left:12px;top:179px" width="14" height="16" viewBox="0 0 14 16"><defs><linearGradient id="dbg" x1="0" x2="1"><stop offset="0" stop-color="#bdbdbd"/><stop offset=".5" stop-color="#ececec"/><stop offset="1" stop-color="#b5b5b5"/></linearGradient></defs><path d="M0 3V13A7 3 0 0 0 14 13V3Z" fill="url(#dbg)"/><ellipse cx="7" cy="3" rx="7" ry="3" fill="#e4e4e4"/><path d="M0 6.5A7 3 0 0 0 14 6.5M0 10A7 3 0 0 0 14 10" fill="none" stroke="#a9a9a9" stroke-width="1"/></svg>
<div style="left:19px;top:201px;width:1px;height:10px;background:none;background:repeating-linear-gradient(180deg,#808080 0 1px,transparent 1px 2px)"></div>
<div style="left:24px;top:215px;width:13px;height:1px;background:none;background:repeating-linear-gradient(90deg,#808080 0 1px,transparent 1px 2px)"></div>
<div style="left:45px;top:227px;width:1px;height:145px;background:none;background:repeating-linear-gradient(180deg,#808080 0 1px,transparent 1px 2px)"></div>
<div style="left:15px;top:211px;width:9px;height:9px;background:#fff;border:1px solid #808080;box-sizing:border-box"></div>
<div style="left:17px;top:215px;width:5px;height:1px;background:#000;"></div>
<svg style="left:37px;top:206px" width="15" height="14" viewBox="0 0 15 14"><rect x=".5" y=".5" width="14" height="13" fill="#fff" stroke="#2b7fb8"/><rect x="2" y="2" width="11" height="3" fill="#ffb732"/><path d="M2 6.5H13M2 9H13M2 11.5H13M5.5 2V12M8.5 2V12M11 2V12" stroke="#9dc0e6" stroke-width="1" fill="none"/></svg>
<span class="t" style="left:58.00px;top:203px;font-size:21px;line-height:21px;color:#000;font-weight:bold;transform:scaleX(0.9437);">contacts</span>
<div style="left:46px;top:241px;width:17px;height:1px;background:none;background:repeating-linear-gradient(90deg,#808080 0 1px,transparent 1px 2px)"></div>
<span class="t" style="left:83.60px;top:229px;font-size:21px;line-height:21px;color:#000;font-weight:bold;transform:scaleX(0.9250);">name</span>
<svg style="left:63px;top:232px" width="15" height="14" viewBox="0 0 15 14"><rect x=".5" y=".5" width="14" height="13" fill="#fff" stroke="#2b7fb8"/><rect x="2" y="5" width="11" height="3.5" fill="#a9cdf3"/><path d="M2 3.5H13M2 10.5H13M5 2V5M8 2V5M11 2V5M5 9V12M8 9V12M11 9V12" stroke="#8a8f99" stroke-width="1" fill="none"/></svg>
<div style="left:46px;top:267px;width:17px;height:1px;background:none;background:repeating-linear-gradient(90deg,#808080 0 1px,transparent 1px 2px)"></div>
<span class="t" style="left:83.60px;top:255px;font-size:21px;line-height:21px;color:#0000e6;font-weight:bold;transform:scaleX(0.9244);">email</span>
<svg style="left:63px;top:258px" width="15" height="14" viewBox="0 0 15 14"><rect x=".5" y=".5" width="14" height="13" fill="#fff" stroke="#2b7fb8"/><rect x="2" y="5" width="11" height="3.5" fill="#a9cdf3"/><path d="M2 3.5H13M2 10.5H13M5 2V5M8 2V5M11 2V5M5 9V12M8 9V12M11 9V12" stroke="#8a8f99" stroke-width="1" fill="none"/></svg>
<div style="left:46px;top:293px;width:17px;height:1px;background:none;background:repeating-linear-gradient(90deg,#808080 0 1px,transparent 1px 2px)"></div>
<span class="t" style="left:83.60px;top:281px;font-size:21px;line-height:21px;color:#000;font-weight:bold;transform:scaleX(0.9286);">phone</span>
<svg style="left:63px;top:284px" width="15" height="14" viewBox="0 0 15 14"><rect x=".5" y=".5" width="14" height="13" fill="#fff" stroke="#2b7fb8"/><rect x="2" y="5" width="11" height="3.5" fill="#a9cdf3"/><path d="M2 3.5H13M2 10.5H13M5 2V5M8 2V5M11 2V5M5 9V12M8 9V12M11 9V12" stroke="#8a8f99" stroke-width="1" fill="none"/></svg>
<div style="left:46px;top:319px;width:17px;height:1px;background:none;background:repeating-linear-gradient(90deg,#808080 0 1px,transparent 1px 2px)"></div>
<span class="t" style="left:83.60px;top:307px;font-size:21px;line-height:21px;color:#000;font-weight:bold;transform:scaleX(0.9357);">message</span>
<svg style="left:63px;top:310px" width="15" height="14" viewBox="0 0 15 14"><rect x=".5" y=".5" width="14" height="13" fill="#fff" stroke="#2b7fb8"/><rect x="2" y="5" width="11" height="3.5" fill="#a9cdf3"/><path d="M2 3.5H13M2 10.5H13M5 2V5M8 2V5M11 2V5M5 9V12M8 9V12M11 9V12" stroke="#8a8f99" stroke-width="1" fill="none"/></svg>
<div style="left:46px;top:345px;width:17px;height:1px;background:none;background:repeating-linear-gradient(90deg,#808080 0 1px,transparent 1px 2px)"></div>
<span class="t" style="left:83.60px;top:333px;font-size:21px;line-height:21px;color:#000;font-weight:bold;transform:scaleX(0.9391);">intro_video</span>
<div style="left:46px;top:371px;width:17px;height:1px;background:none;background:repeating-linear-gradient(90deg,#808080 0 1px,transparent 1px 2px)"></div>
<span class="t" style="left:83.60px;top:359px;font-size:21px;line-height:21px;color:#808080;font-weight:bold;transform:scaleX(0.8720);">id</span>
<svg style="left:64px;top:339px" width="14" height="10" viewBox="0 0 14 10"><rect width="14" height="10" rx="2.5" fill="#d42428"/><path d="M5.2 2.6L9.6 5L5.2 7.4Z" fill="#fff"/></svg>
<svg style="left:63px;top:362px" width="15" height="15" viewBox="0 0 15 15"><path d="M10 .7a4.3 4.3 0 0 0-4.1 5.7L.6 11.8V14.4H3.4V12.6H5.2V10.8H6.8L8.7 8.9A4.3 4.3 0 1 0 10 .7Z" fill="#f6b73c" stroke="#c98a1a" stroke-width=".8"/><circle cx="11" cy="4" r="1.5" fill="#fff" stroke="#c98a1a" stroke-width=".6"/></svg>
<div style="left:12px;top:1070px;width:216px;height:32px;background:#fff;border:1px solid #646464;box-sizing:border-box"></div>
<svg style="left:230px;top:1069px" width="26" height="26" viewBox="0 0 26 26"><path d="M3 22L11 14" stroke="#0a78e0" stroke-width="5" /><circle cx="17" cy="8.5" r="7" fill="#b9dcfb" stroke="#7aa7e0" stroke-width="1"/><ellipse cx="16" cy="6.5" rx="4.5" ry="3" fill="#d9edff"/></svg>
<div style="left:259px;top:174px;width:12px;height:920px;background:#b4b4b4;border:1px solid #696969;box-sizing:border-box"></div>
<div style="left:259px;top:173px;width:12px;height:1px;background:#8a8a8a;"></div>
<div style="left:271px;top:174px;width:1240px;height:1px;background:#696969;"></div>
<div style="left:271px;top:173px;width:1240px;height:1px;background:#808080;"></div>
<div style="left:1511px;top:173px;width:1px;height:922px;background:#fff;"></div>
<div style="left:271px;top:1094px;width:1241px;height:1px;background:#fff;"></div>
<span class="t" style="left:278.00px;top:185px;font-size:36px;line-height:36px;color:#000;font-weight:bold;">App title: Contact Form</span>
<svg style="left:333px;top:244px" width="28" height="29" viewBox="0 0 28 29"><rect x="1" y="1" width="26" height="27" fill="#fff" stroke="#1a78b8" stroke-width="1.400"/><rect x="2.500" y="2.500" width="23" height="4" fill="url(#gHdr)"/><rect x="2.500" y="6.500" width="23" height="14" fill="url(#gRows)"/><path d="M2.500 7H25.500M2.500 11H25.500M2.500 15H25.500M2.500 19H25.500M2.500 23H25.500M9.500 2.500V26.500M15.500 2.500V26.500M21.500 2.500V26.500" stroke="#9fc0e6" stroke-width="1" fill="none"/></svg>
<svg style="left:445px;top:244px" width="31" height="31" viewBox="0 0 31 31"><g transform="scale(0.4844)"><path d="M6 51.200L50.200 7H54.900L63.100 14.900V19.700L18.900 63.800H14.200L6 55.600Z" fill="url(#gWand)" stroke="#8e0a00" stroke-width="1.500" stroke-linejoin="round"/><path d="M41.300 15.900L50.200 7H54.900L63.100 14.900V19.700L52.700 30.100Z" fill="#9a6a00" stroke="#9a6a00" stroke-width="1.500" stroke-linejoin="round"/><path d="M44.500 16L51 9.500Q53 8.500 55 10.500L60 15.500Q61.500 17.500 60 19.500L53 26.500Q50 28 47 25L44 21Q42.500 18.500 44.500 16Z" fill="url(#gTip)"/><path d="M16.70 1.40L19.22 8.13L26.40 8.45L20.77 12.92L22.70 19.85L16.70 15.88L10.70 19.85L12.63 12.92L7.00 8.45L14.18 8.13Z" fill="#ffe81a" stroke="#a8780a" stroke-width="1.100" stroke-linejoin="round"/><path d="M35.00 1.60L38.31 10.45L47.74 10.86L40.35 16.74L42.88 25.84L35.00 20.63L27.12 25.84L29.65 16.74L22.26 10.86L31.69 10.45Z" fill="#ffe81a" stroke="#a8780a" stroke-width="1.100" stroke-linejoin="round"/><path d="M8.00 16.30L9.97 21.58L15.61 21.83L11.20 25.34L12.70 30.77L8.00 27.66L3.30 30.77L4.80 25.34L0.39 21.83L6.03 21.58Z" fill="#ffe81a" stroke="#a8780a" stroke-width="1.100" stroke-linejoin="round"/><path d="M7.10 30.10L8.93 34.99L14.14 35.21L10.06 38.46L11.45 43.49L7.10 40.61L2.75 43.49L4.14 38.46L0.06 35.21L5.27 34.99Z" fill="#ffe81a" stroke="#a8780a" stroke-width="1.100" stroke-linejoin="round"/></g></svg>
<svg style="left:331px;top:407px" width="33" height="24" viewBox="0 0 33 24"><g transform="scale(.49)"><path d="M26 3C36 1 40 4 39 10C38 16 40 20 50 19C60 18 66 24 64 31C61 42 40 48 24 46C9 44 1 35 2 24C3 13 14 5 26 3Z" fill="url(#gPal)" stroke="#a86a00" stroke-width="2.600"/><ellipse cx="25" cy="10.500" rx="7.800" ry="5.800" fill="url(#bR)"/><ellipse cx="13" cy="22" rx="7.500" ry="5.800" fill="url(#bY)" transform="rotate(-15 13 22)"/><ellipse cx="20" cy="34" rx="7.400" ry="6" fill="url(#bB)" transform="rotate(-25 20 34)"/><ellipse cx="35" cy="37" rx="7.400" ry="6" fill="url(#bL)" transform="rotate(-25 35 37)"/><ellipse cx="51" cy="29.500" rx="7.400" ry="6.200" fill="url(#bG)" transform="rotate(-25 51 29.5)"/></g></svg>
<svg style="left:842px;top:786px" width="33" height="33" viewBox="0 0 33 33"><defs><linearGradient id="gSea" x1="0" y1="0" x2="0" y2="1"><stop offset="0" stop-color="#b4e0fb"/><stop offset="1" stop-color="#3d8fdc"/></linearGradient></defs><circle cx="16" cy="16" r="15.500" fill="url(#gSea)" stroke="#6c6cae" stroke-width="1"/><path d="M13 1.500C18 .5 23 2 26.500 5.500C29 8 30.500 11 31 14L27 13L25.500 16L22 14.500L20 10.500L22 7.500L19 5.500L17 8L14.500 6Z" fill="#3aa52a"/><path d="M2 10L5.500 13.500L6 19L10 22L12.500 26.500L9.500 30.500C4 27 .5 21 1 15Z" fill="#3aa52a"/><path d="M6 5C8 3 10 2 12 1.500L11 5L8 7Z" fill="#3aa52a"/><rect x="21.500" y="13" width="9" height="9" fill="#79c8ff" stroke="#c9eaff" stroke-width=".8"/><path d="M6.500 5C4 13 7 19 13.500 19V22.500L20.500 16.500L13.500 10.500V14C10 14 7.500 11 6.500 5Z" fill="#f0371a"/><ellipse cx="27.500" cy="28.500" rx="4.800" ry="3.300" fill="#f4f4fa" stroke="#c4c4dc" stroke-width=".8"/></svg>
<span class="t" style="left:302.50px;top:282px;font-size:17.5px;line-height:17.5px;color:#000;transform:scaleX(1.0190);">New table</span>
<span class="t" style="left:406.60px;top:282px;font-size:17.5px;line-height:17.5px;color:#000;transform:scaleX(0.9904);">Generate app</span>
<div style="left:279px;top:339px;width:1188px;height:33px;background:#ffffe1;border:1px solid #646464;box-sizing:border-box"></div>
<span class="t" style="left:286.50px;top:343px;font-size:24px;line-height:24px;color:#000;font-weight:bold;">Application appearance</span>
<div style="left:279px;top:537px;width:1188px;height:33px;background:#ffffe1;border:1px solid #646464;box-sizing:border-box"></div>
<span class="t" style="left:286.50px;top:541px;font-size:24px;line-height:24px;color:#000;font-weight:bold;">Localization settings</span>
<span class="t" style="left:305.00px;top:442px;font-size:17.5px;line-height:17.5px;color:#000;transform:scaleX(0.9969);">Edit theme</span>
<span class="t" style="left:516.00px;top:398px;font-size:16.5px;line-height:16.5px;color:#000;font-weight:bold;">Number of tables per row in the homepage</span>
<span class="t" style="left:500.50px;top:442px;font-size:16.5px;line-height:16.5px;color:#000;font-weight:bold;">Make first table in the homepage extra wide?</span>
<span class="t" style="left:492.50px;top:482px;font-size:16.5px;line-height:16.5px;color:#000;font-weight:bold;transform:scaleX(0.9950);">Height of table panel in the homepage (pixels)</span>
<div style="left:863px;top:393px;width:84px;height:27px;background:#e1e1e1;border:1px solid #adadad;box-sizing:border-box"></div>
<span class="t" style="left:867.00px;top:398px;font-size:16.5px;line-height:16.5px;color:#000;font-weight:bold;">4</span>
<svg style="left:927px;top:403px" width="12" height="7" viewBox="0 0 12 7"><path d="M1 1L6 6L11 1" fill="none" stroke="#444" stroke-width="1.3"/></svg>
<div style="left:863px;top:435px;width:84px;height:27px;background:#e1e1e1;border:1px solid #adadad;box-sizing:border-box"></div>
<span class="t" style="left:867.00px;top:440px;font-size:16.5px;line-height:16.5px;color:#000;font-weight:bold;">Yes</span>
<svg style="left:927px;top:445px" width="12" height="7" viewBox="0 0 12 7"><path d="M1 1L6 6L11 1" fill="none" stroke="#444" stroke-width="1.3"/></svg>
<div style="left:863px;top:478px;width:83px;height:33px;background:#fff;border:1px solid #7a7a7a;box-sizing:border-box"></div>
<span class="t" style="left:867.00px;top:482px;font-size:16.5px;line-height:16.5px;color:#000;font-weight:bold;">100</span>
<span class="t" style="left:339.00px;top:598px;font-size:17px;line-height:17px;color:#000;font-weight:bold;transform:scaleX(1.0977);">Date/time</span>
<span class="t" style="left:356.50px;top:619px;font-size:17px;line-height:17px;color:#000;font-weight:bold;transform:scaleX(1.1373);">preview</span>
<div style="left:441px;top:595px;width:296px;height:45px;background:#fff;border:1px solid #646464;box-sizing:border-box"></div>
<span class="t" style="left:503.30px;top:600px;font-size:16.5px;line-height:16.5px;color:#000;transform:scaleX(1.0900);">12/31/2022 10:15 PM</span>
<span class="t" style="left:335.50px;top:651px;font-size:17px;line-height:17px;color:#000;font-weight:bold;transform:scaleX(1.0879);">Date order</span>
<div style="left:441px;top:648px;width:296px;height:27px;background:#e1e1e1;border:1px solid #adadad;box-sizing:border-box"></div>
<span class="t" style="left:444.10px;top:653px;font-size:16.5px;line-height:16.5px;color:#000;font-weight:bold;transform:scaleX(1.0157);">Month, day, year</span>
<svg style="left:717px;top:658px" width="12" height="7" viewBox="0 0 12 7"><path d="M1 1L6 6L11 1" fill="none" stroke="#444" stroke-width="1.3"/></svg>
<span class="t" style="left:342.70px;top:693px;font-size:17px;line-height:17px;color:#000;font-weight:bold;transform:scaleX(1.0735);">Separator</span>
<div style="left:441px;top:690px;width:296px;height:27px;background:#e1e1e1;border:1px solid #adadad;box-sizing:border-box"></div>
<span class="t" style="left:445.60px;top:695px;font-size:16.5px;line-height:16.5px;color:#000;font-weight:bold;transform:scaleX(0.9682);">Slash /</span>
<svg style="left:717px;top:700px" width="12" height="7" viewBox="0 0 12 7"><path d="M1 1L6 6L11 1" fill="none" stroke="#444" stroke-width="1.3"/></svg>
<div style="left:441px;top:736px;width:20px;height:20px;background:#fff;border:1px solid #333;box-sizing:border-box"></div>
<span class="t" style="left:464.20px;top:737px;font-size:16.5px;line-height:16.5px;color:#000;font-weight:bold;transform:scaleX(1.0052);">Use 24hr time format</span>
<span class="t" style="left:338.00px;top:783px;font-size:17px;line-height:17px;color:#000;font-weight:bold;transform:scaleX(1.0709);">Character</span>
<span class="t" style="left:341.80px;top:804px;font-size:17px;line-height:17px;color:#000;font-weight:bold;transform:scaleX(1.0800);">encoding</span>
<div style="left:441px;top:781px;width:296px;height:27px;background:#e1e1e1;border:1px solid #adadad;box-sizing:border-box"></div>
<span class="t" style="left:444.60px;top:786px;font-size:16.5px;line-height:16.5px;color:#000;font-weight:bold;transform:scaleX(1.0062);">4-Byte Unicode UTF-8</span>
<svg style="left:717px;top:791px" width="12" height="7" viewBox="0 0 12 7"><path d="M1 1L6 6L11 1" fill="none" stroke="#444" stroke-width="1.3"/></svg>
<div style="left:441px;top:838px;width:20px;height:20px;background:#fff;border:1px solid #333;box-sizing:border-box"></div>
<span class="t" style="left:464.40px;top:839px;font-size:16.5px;line-height:16.5px;color:#000;font-weight:bold;">Don't enforce MySQL encoding</span>
<span class="t" style="left:800.30px;top:825px;font-size:17.5px;line-height:17.5px;color:#000;transform:scaleX(0.9978);">Language files</span>
<span class="t" style="left:334.60px;top:875px;font-size:16.5px;line-height:16.5px;color:#000;transform:scaleX(0.9939);">For right-to-left layout, check the "RTL" option in the 'Application theme' dialog.</span>
<div style="left:288px;top:960px;width:658px;height:120px;background:none;border:1px solid #dcdcdc;box-sizing:border-box"></div>
<div style="left:298px;top:955px;width:90px;height:12px;background:#f0f0f0;"></div>
<span class="t" style="left:303.80px;top:952px;font-size:16.5px;line-height:16.5px;color:#000;font-weight:bold;transform:scaleX(0.9716);">Time zone</span>
<span class="t" style="left:456.30px;top:988px;font-size:24px;line-height:24px;color:#000;font-weight:bold;transform:scaleX(0.9793);word-spacing:6.7px;">America/New York</span>
<div style="left:424px;top:1021px;width:321px;height:37px;background:#e1e1e1;border:1px solid #adadad;box-sizing:border-box"></div>
<span class="t" style="left:513.75px;top:1031px;font-size:16.5px;line-height:16.5px;color:#000;font-weight:bold;transform:scaleX(1.0022);">Change time zone</span>
<div style="left:1485px;top:175px;width:26px;height:919px;background:#fff;"></div>
<div style="left:1486px;top:175px;width:25px;height:26px;background:#f0f0f0;"></div>
<div style="left:1486px;top:1068px;width:25px;height:25px;background:#f0f0f0;"></div>
<div style="left:1486px;top:201px;width:25px;height:433px;background:#cdcdcd;"></div>
<svg style="left:1492.5px;top:184.7px" width="12" height="10" viewBox="0 0 12 10"><path d="M0 6L6 0L12 6V9.500L6 3.500L0 9.500Z" fill="#606060"/></svg>
<svg style="left:1492.5px;top:1075.5px" width="12" height="10" viewBox="0 0 12 10"><path d="M0 3.500L6 9.500L12 3.500V0L6 6L0 0Z" fill="#606060"/></svg>
<div style="left:272px;top:1068px;width:1213px;height:26px;background:#fff;"></div>
<div style="left:272px;top:1069px;width:27px;height:24px;background:#f0f0f0;"></div>
<div style="left:1459px;top:1069px;width:26px;height:24px;background:#f0f0f0;"></div>
<div style="left:272px;top:1093px;width:1213px;height:1px;background:#e8e8e8;"></div>
<svg style="left:281px;top:1075.5px" width="10" height="12" viewBox="0 0 10 12"><path d="M6 0L0 6L6 12H9.500L3.500 6L9.500 0Z" fill="#bfbfbf"/></svg>
<svg style="left:1467px;top:1075.5px" width="10" height="12" viewBox="0 0 10 12"><path d="M3.500 0L9.500 6L3.500 12H0L6 6L0 0Z" fill="#bfbfbf"/></svg>
</body></html>
